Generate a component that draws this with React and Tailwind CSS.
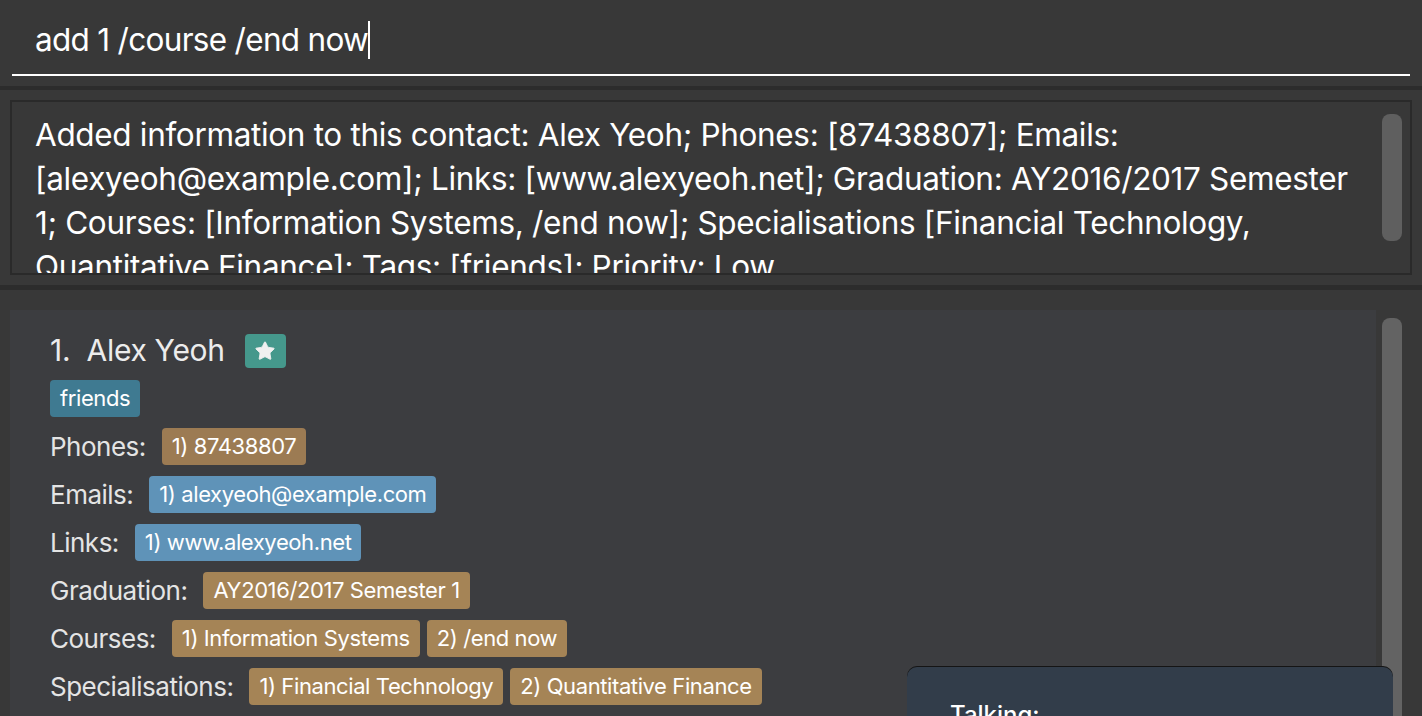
import { Star } from 'lucide-react'

const font = { fontFamily: 'Inter, "Noto Sans", sans-serif' }

function Tag({ children, color = 'bg-[#a58456]' }) {
  return (
    <span className={`${color} rounded-[4px] px-[10px] h-[37px] flex items-center text-[22px] text-white tracking-[-0.4px] whitespace-nowrap`}>
      {children}
    </span>
  )
}

function Row({ label, children }) {
  return (
    <div className="flex items-center h-[37px] gap-[16px]">
      <span className="text-[26px] text-[#e4e4e4] tracking-[-0.5px] whitespace-nowrap">{label}</span>
      <div className="flex gap-[7px]">{children}</div>
    </div>
  )
}

export default function App() {
  const lines = [
    'Added information to this contact: Alex Yeoh; Phones: [87438807]; Emails:',
    '[alexyeoh@example.com]; Links: [www.alexyeoh.net]; Graduation: AY2016/2017 Semester',
    '1; Courses: [Information Systems, /end now]; Specialisations [Financial Technology,',
    'Quantitative Finance]; Tags: [friends]; Priority: Low',
  ]

  return (
    <div style={font} className="relative w-[1422px] h-[716px] overflow-hidden bg-[#383838] flex flex-col">
      {/* command box */}
      <div className="h-[86px] px-[12px] pt-[14px] shrink-0">
        <div className="border-b-2 border-white h-[62px] flex items-center pl-[23px] pb-[8px]">
          <span className="text-[31.5px] text-white tracking-[-0.7px]">add 1 /course /end now</span>
          <span className="w-[2px] h-[38px] bg-white" />
        </div>
      </div>
      <div className="h-[4px] bg-[#2c2c2c] shrink-0" />

      {/* result box */}
      <div className="px-[10px] pt-[10px] pb-[10px] shrink-0">
        <div className="border-2 border-[#2a2a2a] h-[175px] flex overflow-hidden">
          <div className="flex-1 pl-[23px] pt-[11px] overflow-hidden">
            {lines.map((l) => (
              <div key={l} className="text-[31.5px] leading-[44px] text-white tracking-[-0.33px] whitespace-nowrap">
                {l}
              </div>
            ))}
          </div>
          <div className="w-[20px] mr-[8px] mt-[12px] h-[127px] bg-[#5f5f5f] rounded-[8px]" />
        </div>
      </div>
      <div className="h-[5px] bg-[#2c2c2c] shrink-0" />

      {/* person list */}
      <div className="flex-1 flex pt-[20px] pl-[10px] pr-[20px] gap-[6px] min-h-0">
        <div className="flex-1 bg-[#3c3d40] pl-[40px] pt-[22px] flex flex-col gap-[11px]">
          <div className="flex items-center h-[37px] gap-[20px]">
            <span className="text-[30px] text-[#ececec] tracking-[-0.3px]">1.&nbsp;&nbsp;Alex Yeoh</span>
            <span className="w-[41px] h-[34px] rounded-[4px] bg-[#45988c] flex items-center justify-center">
              <Star size={22} fill="#f0f0f0" stroke="#f0f0f0" strokeWidth={1} />
            </span>
          </div>
          <div className="flex">
            <Tag color="bg-[#3f7a91]">friends</Tag>
          </div>
          <Row label="Phones:">
            <Tag color="bg-[#9c7b53]">1) 87438807</Tag>
          </Row>
          <Row label="Emails:">
            <Tag color="bg-[#5f93b8]">1) alexyeoh@example.com</Tag>
          </Row>
          <Row label="Links:">
            <Tag color="bg-[#5f93b8]">1) www.alexyeoh.net</Tag>
          </Row>
          <Row label="Graduation:">
            <Tag>AY2016/2017 Semester 1</Tag>
          </Row>
          <Row label="Courses:">
            <Tag>1) Information Systems</Tag>
            <Tag>2) /end now</Tag>
          </Row>
          <Row label="Specialisations:">
            <Tag>1) Financial Technology</Tag>
            <Tag>2) Quantitative Finance</Tag>
          </Row>
        </div>
        <div className="w-[20px] mt-[8px] bg-[#636363] rounded-t-[8px]" />
      </div>

      {/* talking popup */}
      <div className="absolute left-[907px] top-[667px] w-[486px] h-[80px] bg-[#323d4a] rounded-[10px] shadow-[0_-1px_0_#151515] pl-[43px] pt-[30px]">
        <span className="text-[24px] font-medium text-white">Talking:</span>
      </div>
    </div>
  )
}
